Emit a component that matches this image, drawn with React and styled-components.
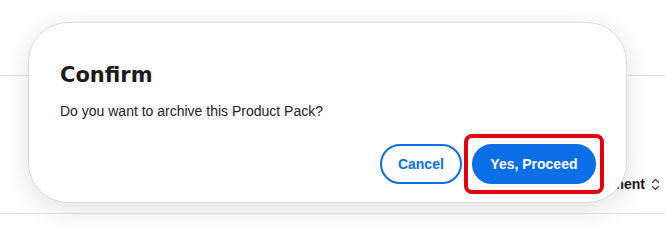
import styled, { createGlobalStyle } from 'styled-components'

const GlobalStyle = createGlobalStyle`
body {
    margin: 0;
    background: #FFFFFF;
    font-family: 'Liberation Sans', Arial, sans-serif;
}
`

const Page = styled.div`
position: relative;
width: 665px;
height: 234px;
overflow: hidden;
background: #FFFFFF;
`

const TopBar = styled.div`
height: 75px;
border-bottom: 1px solid #E3E3E3;
`

const HeaderRow = styled.div`
display: flex;
justify-content: flex-end;
align-items: flex-end;
height: 138px;
padding: 0 5px 21px 0;
box-sizing: border-box;
border-bottom: 1px solid #E3E3E3;
`

const HeaderCell = styled.div`
display: flex;
align-items: center;
gap: 6px;
font-size: 14px;
line-height: 16px;
font-weight: 700;
color: #1A1A1A;
`

const Dialog = styled.div`
position: absolute;
left: 28px;
top: 22px;
width: 599px;
box-sizing: border-box;
padding: 40px 30px 18px 31px;
background: #FFFFFF;
border: 1px solid #DCDCDC;
border-radius: 40px;
box-shadow: 0px 6px 26px rgba(0, 0, 0, 0.12);
`

const Title = styled.h2`
margin: 0;
font-family: 'DejaVu Sans', Verdana, sans-serif;
font-size: 21px;
line-height: 24px;
font-weight: 700;
color: #1C1C1C;
`

const Message = styled.p`
margin: 16px 0 0;
font-size: 14px;
line-height: 16px;
color: #222222;
`

const Actions = styled.div`
display: flex;
justify-content: flex-end;
align-items: center;
gap: 10px;
margin-top: 25px;
`

const Button = styled.button`
height: 40px;
padding: 0 ${(p) => (p.$primary ? '16.5px' : '16px')};
border: 2px solid #0A6EE6;
border-radius: 20px;
background: ${(p) => (p.$primary ? '#0A6EE6' : '#FFFFFF')};
color: ${(p) => (p.$primary ? '#FFFFFF' : '#0A6EE6')};
font-family: 'Liberation Sans', Arial, sans-serif;
font-size: 14px;
font-weight: 700;
cursor: pointer;
`

const Highlight = styled.span`
position: relative;
display: inline-flex;
&::after {
    content: '';
    position: absolute;
    inset: -10px -8px -10px -8px;
    border: 4px solid #E2000F;
    border-radius: 8px;
    pointer-events: none;
}
`

const SortIcon = () => (
    <svg width="9" height="13" viewBox="0 0 9 13" fill="none" stroke="#444" strokeWidth="1.3" strokeLinecap="round" strokeLinejoin="round">
        <path d="M1.5 4.5 L4.5 1.5 L7.5 4.5" />
        <path d="M1.5 8.5 L4.5 11.5 L7.5 8.5" />
    </svg>
)

const App = () => {
    return (
        <Page>
            <GlobalStyle />
            <TopBar />
            <HeaderRow>
                <HeaderCell>
                    Assignment
                    <SortIcon />
                </HeaderCell>
            </HeaderRow>
            <Dialog role="dialog">
                <Title>Confirm</Title>
                <Message>Do you want to archive this Product Pack?</Message>
                <Actions>
                    <Button>Cancel</Button>
                    <Highlight>
                        <Button $primary>Yes, Proceed</Button>
                    </Highlight>
                </Actions>
            </Dialog>
        </Page>
    )
}

export default App
